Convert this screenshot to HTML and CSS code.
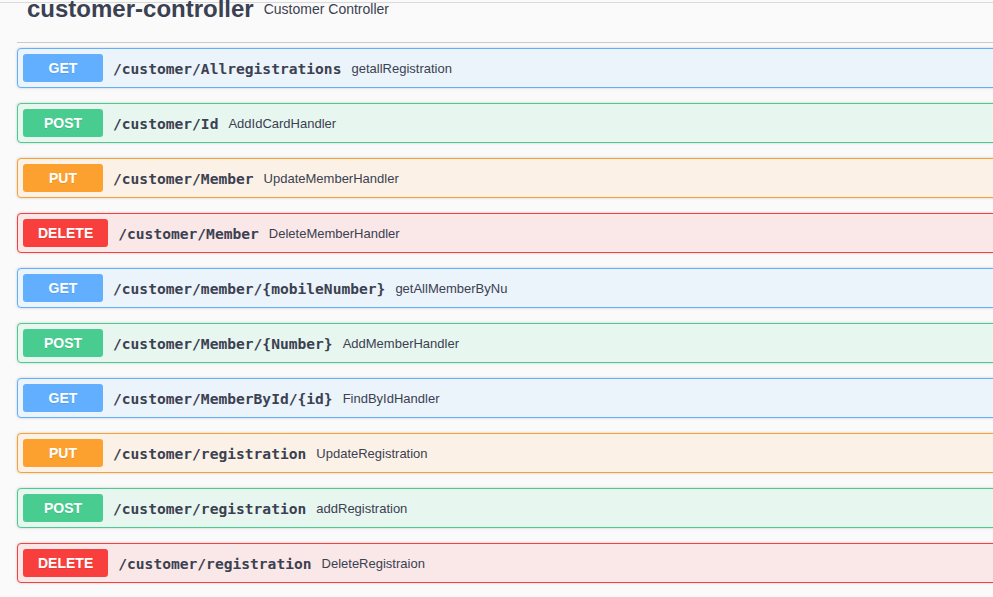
FILE: index.html
```html
<!DOCTYPE html>
<html lang="en">
<head>
<meta charset="utf-8">
<title>customer-controller</title>
<link rel="stylesheet" href="styles.css">
</head>
<body>
<div class="page">
  <section class="tag-section">
    <h4 class="tag">
      <span class="tag-name">customer-controller</span>
      <small class="tag-desc">Customer Controller</small>
    </h4>
    <div class="ops">
      <div class="opblock get"><span class="method">GET</span><span class="path">/customer/Allregistrations</span><span class="desc">getallRegistration</span></div>
      <div class="opblock post"><span class="method">POST</span><span class="path">/customer/Id</span><span class="desc">AddIdCardHandler</span></div>
      <div class="opblock put"><span class="method">PUT</span><span class="path">/customer/Member</span><span class="desc">UpdateMemberHandler</span></div>
      <div class="opblock delete"><span class="method">DELETE</span><span class="path">/customer/Member</span><span class="desc">DeleteMemberHandler</span></div>
      <div class="opblock get"><span class="method">GET</span><span class="path">/customer/member/{mobileNumber}</span><span class="desc">getAllMemberByNu</span></div>
      <div class="opblock post"><span class="method">POST</span><span class="path">/customer/Member/{Number}</span><span class="desc">AddMemberHandler</span></div>
      <div class="opblock get"><span class="method">GET</span><span class="path">/customer/MemberById/{id}</span><span class="desc">FindByIdHandler</span></div>
      <div class="opblock put"><span class="method">PUT</span><span class="path">/customer/registration</span><span class="desc">UpdateRegistration</span></div>
      <div class="opblock post"><span class="method">POST</span><span class="path">/customer/registration</span><span class="desc">addRegistration</span></div>
      <div class="opblock delete"><span class="method">DELETE</span><span class="path">/customer/registration</span><span class="desc">DeleteRegistraion</span></div>
    </div>
  </section>
</div>
</body>
</html>
```

FILE: styles.css
```css
html, body {
  margin: 0;
  padding: 0;
  overflow: hidden;
}

body {
  background: linear-gradient(#dadada, #dadada) 0 2px / 100% 1px no-repeat, #fafafa;
  font-family: "Liberation Sans", Arial, sans-serif;
  color: #3b4151;
}

.page {
  width: 1010px;
  padding-left: 17px;
}

.tag {
  display: flex;
  align-items: flex-start;
  height: 18px;
  margin: 0;
  padding: 0 0 24px 10px;
  border-bottom: 1px solid #c9cacd;
}

.tag-name {
  font-size: 24px;
  font-weight: 700;
  line-height: 18px;
  color: #3b4151;
}

.tag-desc {
  font-size: 14px;
  font-weight: 400;
  line-height: 17px;
  padding: 1px 10px 0;
  color: #3b4151;
}

.ops {
  padding-top: 5px;
}

.opblock {
  display: flex;
  align-items: center;
  box-sizing: border-box;
  height: 40px;
  padding: 5px;
  margin-bottom: 15px;
  border: 1px solid;
  border-radius: 4px;
  box-shadow: 0 0 3px rgba(0, 0, 0, 0.19);
}

.method {
  box-sizing: border-box;
  min-width: 80px;
  padding: 6px 15px;
  border-radius: 3px;
  font-size: 14px;
  font-weight: 700;
  line-height: 16px;
  color: #fff;
  text-align: center;
  text-shadow: 0 1px 0 rgba(0, 0, 0, 0.1);
}

.path {
  padding: 0 10px;
  font-family: "DejaVu Sans Mono", "Liberation Mono", monospace;
  font-size: 14.6px;
  font-weight: 700;
  color: #3b4151;
}

.desc {
  font-size: 13px;
  color: #3b4151;
}

.get { background: #ebf3fb; border-color: #61affe; }
.get .method { background: #61affe; }

.post { background: #e8f6f0; border-color: #49cc90; }
.post .method { background: #49cc90; }

.put { background: #fbf1e6; border-color: #fca130; }
.put .method { background: #fca130; }

.delete { background: #fae7e7; border-color: #f93e3e; }
.delete .method { background: #f93e3e; }
```
